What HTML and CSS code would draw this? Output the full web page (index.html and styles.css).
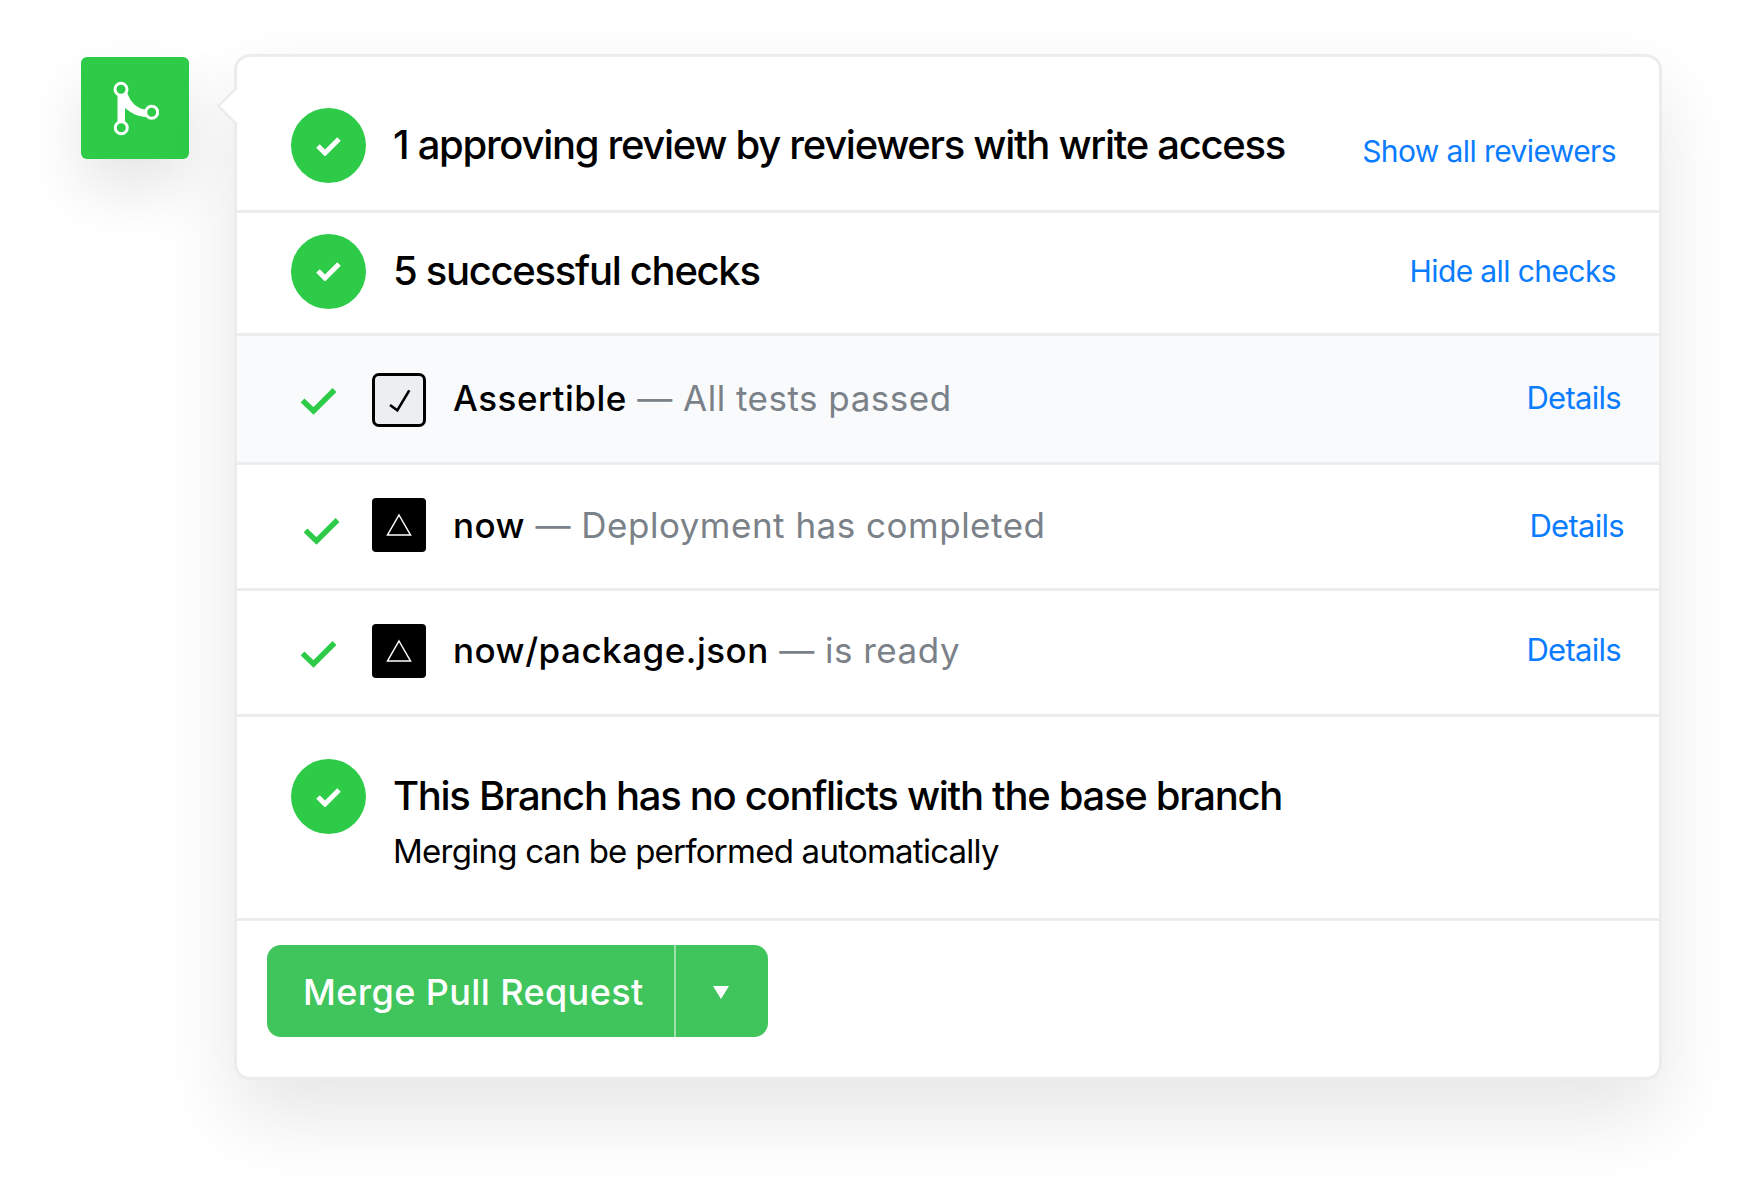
FILE: index.html
```html
<!DOCTYPE html>
<html lang="en">
<head>
    <meta charset="UTF-8">
    <meta name="viewport" content="width=device-width, initial-scale=1.0">
    <title>Merge Pull Request</title>
    <link rel="stylesheet" href="styles.css">
</head>
<body>
    <div class="page">
        <!-- Branch badge -->
        <div class="tile">
            <svg width="48" height="56" viewBox="0 0 48 56">
                <path d="M6.500 12H16C19 22 26 29 36 30V37C27 37 20 33 14 28V46H6.500Z" fill="#fff"/>
                <circle cx="10" cy="9.300" r="6" fill="#2dcb48" stroke="#fff" stroke-width="3"/>
                <circle cx="10.300" cy="47.700" r="6" fill="#2dcb48" stroke="#fff" stroke-width="3"/>
                <circle cx="40.700" cy="32.300" r="6" fill="#2dcb48" stroke="#fff" stroke-width="3"/>
            </svg>
        </div>

        <div class="card">
            <div class="arrow"></div>

            <!-- Summary rows -->
            <div class="row row-review">
                <span class="dot">
                    <svg width="26" height="20" viewBox="0 0 26 20" fill="none"><path d="M2 10L9 17L23 3" stroke="#fff" stroke-width="5"/></svg>
                </span>
                <span class="title">1 approving review by reviewers with write access</span>
                <a class="link link-low">Show all reviewers</a>
            </div>
            <div class="row row-checks">
                <span class="dot">
                    <svg width="26" height="20" viewBox="0 0 26 20" fill="none"><path d="M2 10L9 17L23 3" stroke="#fff" stroke-width="5"/></svg>
                </span>
                <span class="title">5 successful checks</span>
                <a class="link">Hide all checks</a>
            </div>

            <!-- Individual checks -->
            <div class="row check check-first shaded">
                <svg class="tick" width="36" height="28" viewBox="0 0 36 28" fill="none"><path d="M1.500 13.500L12.500 24L33.500 3" stroke="#2dcb48" stroke-width="5.500"/></svg>
                <span class="logo logo-box">
                    <svg width="24" height="24" viewBox="0 0 24 24" fill="none"><path d="M3 17L10.300 22.300L22.300 2.300" stroke="#000" stroke-width="2.600"/></svg>
                </span>
                <span class="check-text"><b>Assertible</b> — All tests passed</span>
                <a class="details">Details</a>
            </div>
            <div class="row check check-second">
                <svg class="tick" width="36" height="28" viewBox="0 0 36 28" fill="none"><path d="M1.500 13.500L12.500 24L33.500 3" stroke="#2dcb48" stroke-width="5.500"/></svg>
                <span class="logo">
                    <svg width="26" height="24" viewBox="0 0 26 24" fill="none"><path d="M13 2L24.500 22H1.500Z" stroke="#fff" stroke-width="1.500"/></svg>
                </span>
                <span class="check-text"><b>now</b> — Deployment has completed</span>
                <a class="details">Details</a>
            </div>
            <div class="row check check-third">
                <svg class="tick" width="36" height="28" viewBox="0 0 36 28" fill="none"><path d="M1.500 13.500L12.500 24L33.500 3" stroke="#2dcb48" stroke-width="5.500"/></svg>
                <span class="logo">
                    <svg width="26" height="24" viewBox="0 0 26 24" fill="none"><path d="M13 2L24.500 22H1.500Z" stroke="#fff" stroke-width="1.500"/></svg>
                </span>
                <span class="check-text"><b>now/package.json</b> — is ready</span>
                <a class="details">Details</a>
            </div>

            <!-- Conflicts -->
            <div class="row row-branch">
                <span class="dot">
                    <svg width="26" height="20" viewBox="0 0 26 20" fill="none"><path d="M2 10L9 17L23 3" stroke="#fff" stroke-width="5"/></svg>
                </span>
                <div class="branch-text">
                    <div class="title">This Branch has no conflicts with the base branch</div>
                    <div class="subtitle">Merging can be performed automatically</div>
                </div>
            </div>

            <!-- Merge button -->
            <div class="row row-merge">
                <div class="merge">
                    <span class="merge-label">Merge Pull Request</span>
                    <span class="merge-menu"><i class="caret"></i></span>
                </div>
            </div>
        </div>
    </div>
</body>
</html>
```

FILE: styles.css
```css
/* General Styles */
* {
    box-sizing: border-box;
    margin: 0;
    padding: 0;
    font-family: Inter, "Liberation Sans", sans-serif;
}
body {
    background-color: #ffffff;
    overflow: hidden;
}
.page {
    display: flex;
    align-items: flex-start;
    gap: 45px;
    height: 1188px;
    padding: 54px 0 0 81px;
}

/* Branch badge */
.tile {
    display: flex;
    align-items: center;
    justify-content: center;
    flex: none;
    width: 108px;
    height: 102px;
    margin-top: 3px;
    border-radius: 6px;
    background-color: #2dcb48;
    box-shadow: 0 30px 60px rgba(0, 0, 0, 0.1);
}

/* Card */
.card {
    position: relative;
    flex: none;
    width: 1428px;
    height: 1026px;
    background-color: #ffffff;
    border: 3px solid #ececec;
    border-radius: 16px;
    box-shadow: 0 36px 80px rgba(0, 0, 0, 0.1);
}
.arrow {
    position: absolute;
    top: 35px;
    left: -15px;
    width: 28px;
    height: 28px;
    background-color: #ffffff;
    border-left: 3px solid #ececec;
    border-bottom: 3px solid #ececec;
    border-radius: 3px;
    transform: rotate(45deg);
}

/* Rows */
.row {
    position: relative;
    display: flex;
    align-items: center;
    padding-left: 54px;
    border-bottom: 3px solid #ececec;
}
.row-review {
    height: 156px;
    padding-top: 24px;
}
.row-checks {
    height: 123px;
    padding-bottom: 4px;
}
.row-review .title,
.row-checks .title {
    margin-bottom: 2px;
}
.row-branch {
    align-items: flex-start;
    height: 204px;
    padding-top: 42px;
}
.row-merge {
    align-items: flex-start;
    height: 156px;
    padding: 24px 0 0 30px;
    border-bottom: none;
}
.dot {
    display: flex;
    align-items: center;
    justify-content: center;
    flex: none;
    width: 75px;
    height: 75px;
    margin-right: 27px;
    border-radius: 50%;
    background-color: #2dcb48;
}
.title {
    font-size: 40px;
    font-weight: 500;
    letter-spacing: -1.3px;
    color: #000000;
}
.branch-text {
    margin-top: 12px;
}
.subtitle {
    margin-top: 11px;
    font-size: 33px;
    letter-spacing: -0.75px;
    color: #000000;
}
.link {
    margin-left: auto;
    margin-right: 43px;
    font-size: 30px;
    letter-spacing: -0.6px;
    color: #0a7cff;
}
.link-low {
    position: relative;
    top: 5px;
}

/* Individual checks */
.check {
    height: 126px;
    padding-left: 64px;
}
.shaded {
    background-color: #f9fafc;
}
.tick {
    flex: none;
    margin-right: 35px;
}
.logo {
    display: flex;
    align-items: center;
    justify-content: center;
    flex: none;
    width: 54px;
    height: 54px;
    margin-right: 27px;
    margin-bottom: 3px;
    border-radius: 4px;
    background-color: #000000;
}
.logo-box {
    margin-top: 2px;
    margin-bottom: 0;
    background-color: #eceef0;
    border: 3px solid #000000;
    border-radius: 7px;
}
.check-text {
    font-size: 35px;
    letter-spacing: 0.5px;
    color: #7b8188;
}
.check-text b {
    font-weight: 500;
    color: #000000;
}
.details {
    margin-left: auto;
    margin-right: 38px;
    font-size: 31px;
    letter-spacing: -0.7px;
    color: #0a7cff;
}
.check-first {
    height: 129px;
}
.check-first .tick {
    margin-top: 3px;
}
.check-first .check-text {
    margin-bottom: 2px;
}
.check-first .details {
    margin-bottom: 4px;
}
.check-second .tick {
    margin-top: 8px;
    margin-left: 3px;
    margin-right: 32px;
}
.check-second .check-text {
    margin-bottom: 4px;
}
.check-second .details {
    margin-right: 35px;
    margin-bottom: 2px;
}
.check-third .tick {
    margin-top: 2px;
}
.check-third .check-text,
.check-third .details {
    margin-bottom: 6px;
}

/* Merge button */
.merge {
    display: flex;
    width: 501px;
    height: 92px;
    border-radius: 14px;
    background-color: #40c55d;
    color: #ffffff;
}
.merge-label {
    display: flex;
    align-items: center;
    width: 409px;
    padding-top: 2px;
    padding-left: 36px;
    font-size: 36px;
    font-weight: 500;
    letter-spacing: 0.4px;
    border-right: 2px solid #9be3aa;
}
.merge-menu {
    display: flex;
    align-items: center;
    justify-content: center;
    flex: 1;
    padding-top: 2px;
    padding-right: 3px;
}
.caret {
    width: 0;
    height: 0;
    border-left: 8px solid transparent;
    border-right: 8px solid transparent;
    border-top: 13px solid #ffffff;
}
```
